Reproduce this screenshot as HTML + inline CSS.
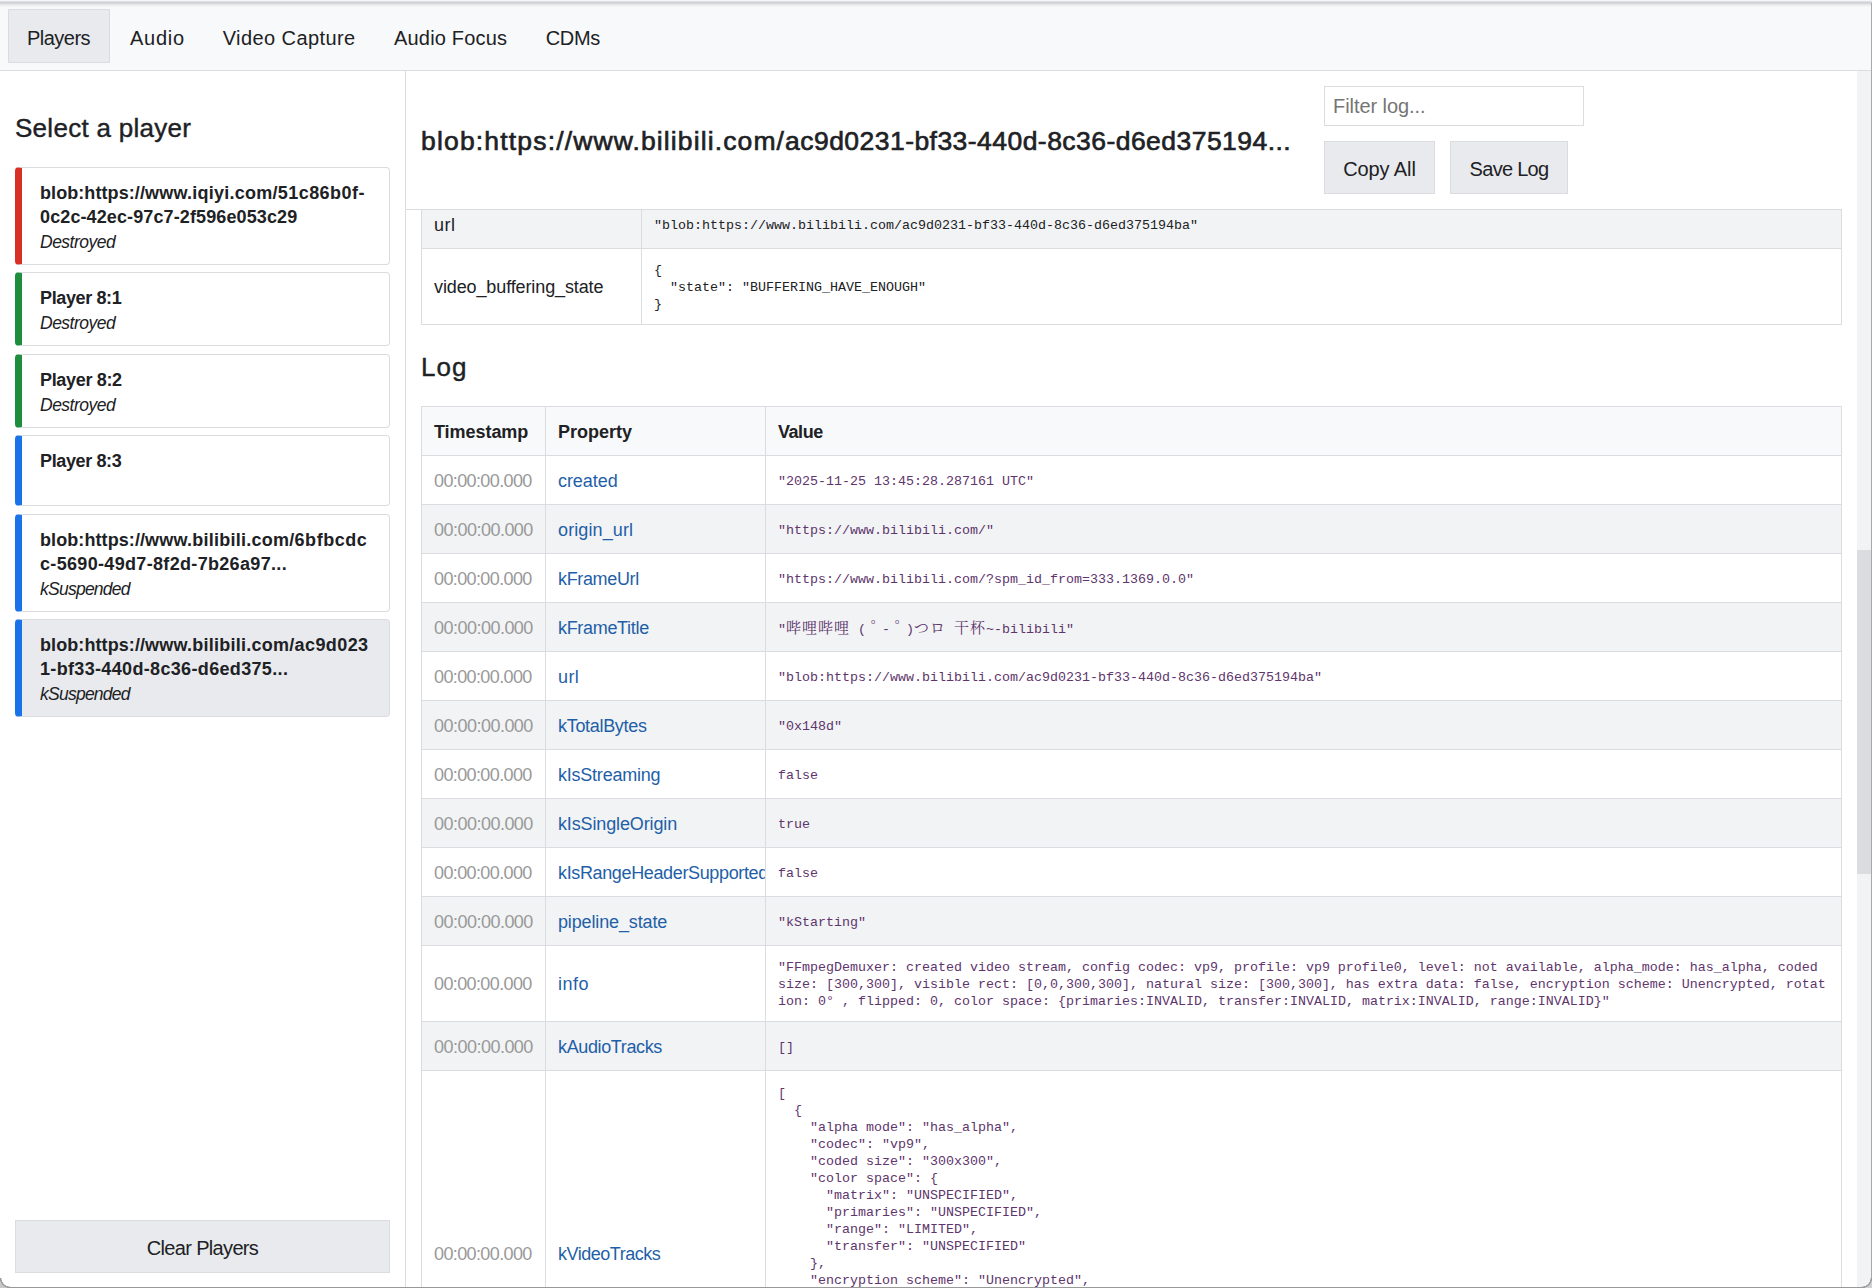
<!DOCTYPE html>
<html lang="en">
<head>
<meta charset="utf-8">
<title>Media Internals</title>
<style>
*{box-sizing:border-box;margin:0;padding:0}
html,body{width:1872px;height:1288px;overflow:hidden;background:#fff}
body{position:relative;font-family:"Liberation Sans","Noto Sans CJK SC",sans-serif;color:#202124;font-size:18px}
.abs{position:absolute}
#nav{left:0;top:0;width:1872px;height:71px;background:#f8f9fa;border-bottom:1px solid #dadce0}
#topshadow{left:0;top:0;width:1872px;height:8px;background:linear-gradient(#f3f6fd 0,#f3f6fd 0.6px,#dfe1e3 1.5px,#cdd0d2 2.5px,#d8dadc 3.5px,#e4e5e7 4.5px,#eeeff1 5.5px,#f4f5f6 6.5px,#f8f9fa 7.5px)}
.tab{top:9px;height:54px;line-height:59px;font-size:20px;white-space:nowrap}
.tab.sel{background:#e8eaed;border:1px solid #dadce0;line-height:57px}
#side{left:0;top:71px;width:406px;height:1217px;border-right:1px solid #dadce0;background:#fff}
h2{font-weight:normal;-webkit-text-stroke:0.4px #202124;font-size:26px;white-space:nowrap}
.pl{left:15px;width:375px;border:1px solid #dadce0;border-left:7px solid #1a73e8;border-radius:4px;background:#fff;padding:13px 0 0 18px;line-height:24px;font-size:18px}
.pl b{display:block;white-space:nowrap;font-weight:bold;height:24px}
.pl i{display:block;font-style:italic;font-size:17.5px;height:24px;position:relative;top:1px}
.btn{background:#e8eaed;border:1px solid #dadce0;font-size:20px;text-align:center;white-space:nowrap}
#main{left:406px;top:71px;width:1451px;height:1217px;overflow:hidden;background:#fff}
#hdr{left:406px;top:71px;width:1436px;height:139px;background:#fff;border-bottom:1px solid #dadce0}
#sb{left:1857px;top:71px;width:14px;height:1217px;background:#f1f3f4}
#thumb{left:1857px;top:550px;width:14px;height:324px;background:#dadce0}
#edge{left:1871px;top:3px;width:1px;height:1285px;background:#a9a9a9}
#bottom{left:0;top:1287px;width:1872px;height:1px;background:#999}
#corner2{left:1862px;top:1278px;width:10px;height:10px;background:radial-gradient(circle at 0 0,rgba(255,255,255,0) 8.3px,#999 8.9px,#999 9.8px,#d0d0d0 10.2px)}
#corner{left:0;top:1278px;width:10px;height:10px;background:radial-gradient(circle at 100% 0,rgba(255,255,255,0) 8.3px,#999 8.9px,#999 9.8px,#c6c7c9 10.2px)}
table{border-collapse:collapse;table-layout:fixed;position:absolute}
td,th{border:1px solid #dadce0;padding:2px 0 0 12px;text-align:left;vertical-align:middle;overflow:hidden;white-space:nowrap;font-size:18px;font-weight:normal}
th{font-weight:bold;background:#f8f9fa}
tr.alt td{background:#f1f3f4}
.mono{font-family:"Liberation Mono","Noto Serif CJK SC",monospace;font-size:13.33px;line-height:17px;white-space:pre}
.v{color:#5e356c}
.ts{color:#999}
.pr{color:#1f5fa8}
.cjk{font-family:"Noto Serif CJK SC",serif;font-size:15px;letter-spacing:1px;line-height:17px}
.fw{display:inline-block;width:16px}
.dk{position:relative;left:5px}
#title{left:421px;top:123px;font-size:26.5px;line-height:36px;font-weight:normal;-webkit-text-stroke:0.65px #202124;white-space:nowrap}
#filter{left:1324px;top:86px;width:260px;height:40px;border:1px solid #dadce0;background:#fff;color:#757575;font-size:20px;line-height:38px;padding-left:8px}
</style>
</head>
<body>
<div id="nav" class="abs"></div>
<div id="topshadow" class="abs"></div>
<div class="abs tab sel" style="left:8px;width:102px;padding-left:18px"><span id="tabPlayers" style="letter-spacing:-0.515px">Players</span></div>
<div class="abs tab" style="left:130px"><span id="tabAudio" style="letter-spacing:0.750px">Audio</span></div>
<div class="abs tab" style="left:222.7px"><span id="tabVC" style="letter-spacing:0.417px">Video Capture</span></div>
<div class="abs tab" style="left:394px"><span id="tabAF" style="letter-spacing:0.190px">Audio Focus</span></div>
<div class="abs tab" style="left:545.7px"><span id="tabCDM" style="letter-spacing:-0.298px">CDMs</span></div>
<div id="side" class="abs"></div>
<h2 class="abs" style="left:15px;top:112px;line-height:32px"><span id="selTitle" style="letter-spacing:0.283px">Select a player</span></h2>
<div class="abs pl" style="top:167px;height:98px;border-left-color:#d93025"><b><span id="p1a_0" style="letter-spacing:0.077px">blob:https://</span><span id="p1a_1" style="letter-spacing:0.237px">www.iqiyi.com/</span><span id="p1a_2" style="letter-spacing:0.479px">51c86b0f-</span></b><b><span id="p1b" style="letter-spacing:0.115px">0c2c-42ec-97c7-2f596e053c29</span></b><i><span id="p1s" style="letter-spacing:-0.500px">Destroyed</span></i></div>
<div class="abs pl" style="top:272px;height:74px;border-left-color:#1e8e3e"><b><span id="p2a" style="letter-spacing:-0.375px">Player 8:1</span></b><i><span id="p2s" style="letter-spacing:-0.500px">Destroyed</span></i></div>
<div class="abs pl" style="top:354px;height:74px;border-left-color:#1e8e3e"><b><span id="p3a" style="letter-spacing:-0.327px">Player 8:2</span></b><i><span id="p3s" style="letter-spacing:-0.500px">Destroyed</span></i></div>
<div class="abs pl" style="top:435px;height:71px"><b><span id="p4a" style="letter-spacing:-0.375px">Player 8:3</span></b></div>
<div class="abs pl" style="top:514px;height:98px"><b><span id="p5a_0" style="letter-spacing:0.083px">blob:https://</span><span id="p5a_1" style="letter-spacing:0.246px">www.bilibili.com/</span><span id="p5a_2" style="letter-spacing:0.532px">6bfbcdc</span></b><b><span id="p5b" style="letter-spacing:0.327px">c-5690-49d7-8f2d-7b26a97...</span></b><i><span id="p5s" style="letter-spacing:-0.750px">kSuspended</span></i></div>
<div class="abs pl" style="top:619px;height:98px;background:#e8eaed"><b><span id="p6a_0" style="letter-spacing:0.083px">blob:https://</span><span id="p6a_1" style="letter-spacing:0.246px">www.bilibili.com/</span><span id="p6a_2" style="letter-spacing:0.416px">ac9d023</span></b><b><span id="p6b" style="letter-spacing:0.337px">1-bf33-440d-8c36-d6ed375...</span></b><i><span id="p6s" style="letter-spacing:-0.750px">kSuspended</span></i></div>
<div class="abs btn" style="left:15px;top:1220px;width:375px;height:53px;line-height:55px"><span id="clear" style="letter-spacing:-0.667px">Clear Players</span></div>
<div id="main" class="abs"></div>
<table style="left:421px;top:199px;width:1421px"><colgroup><col style="width:220px"><col></colgroup>
<tr class="alt" style="height:49px"><td><span id="purl" style="letter-spacing:0.450px">url</span></td><td class="mono">"blob:https://www.bilibili.com/ac9d0231-bf33-440d-8c36-d6ed375194ba"</td></tr>
<tr style="height:76px"><td><span id="pvbs" style="letter-spacing:-0.115px">video_buffering_state</span></td><td class="mono">{
  "state": "BUFFERING_HAVE_ENOUGH"
}</td></tr>
</table>
<h2 class="abs" style="left:421px;top:351px;line-height:32px"><span id="log" style="letter-spacing:1.100px">Log</span></h2>
<table style="left:421px;top:406px;width:1421px"><colgroup><col style="width:124px"><col style="width:220px"><col></colgroup>
<tr style="height:49px"><th><span id="hTs" style="letter-spacing:-0.050px">Timestamp</span></th><th><span id="hPr" style="letter-spacing:0.016px">Property</span></th><th><span id="hVa" style="letter-spacing:-0.450px">Value</span></th></tr>
<tr style="height:49px"><td class="ts"><span id="ts0" style="letter-spacing:-0.612px">00:00:00.000</span></td><td class="pr"><span id="pr0" style="letter-spacing:-0.063px">created</span></td><td class="mono v">"2025-11-25 13:45:28.287161 UTC"</td></tr>
<tr class="alt" style="height:49px"><td class="ts"><span id="ts1" style="letter-spacing:-0.521px">00:00:00.000</span></td><td class="pr"><span id="pr1" style="letter-spacing:0.117px">origin_url</span></td><td class="mono v">"https://www.bilibili.com/"</td></tr>
<tr style="height:49px"><td class="ts"><span id="ts2" style="letter-spacing:-0.612px">00:00:00.000</span></td><td class="pr"><span id="pr2" style="letter-spacing:-0.346px">kFrameUrl</span></td><td class="mono v">"https://www.bilibili.com/?spm_id_from=333.1369.0.0"</td></tr>
<tr class="alt" style="height:49px"><td class="ts"><span id="ts3" style="letter-spacing:-0.521px">00:00:00.000</span></td><td class="pr"><span id="pr3" style="letter-spacing:-0.320px">kFrameTitle</span></td><td class="mono v">"<span class="cjk">哔哩哔哩</span> (<span class="cjk dk">゜</span>-<span class="cjk dk">゜</span>)<span class="cjk">つロ</span> <span class="cjk">干杯</span>~-bilibili"</td></tr>
<tr style="height:49px"><td class="ts"><span id="ts4" style="letter-spacing:-0.612px">00:00:00.000</span></td><td class="pr"><span id="pr4" style="letter-spacing:0.400px">url</span></td><td class="mono v">"blob:https://www.bilibili.com/ac9d0231-bf33-440d-8c36-d6ed375194ba"</td></tr>
<tr class="alt" style="height:49px"><td class="ts"><span id="ts5" style="letter-spacing:-0.521px">00:00:00.000</span></td><td class="pr"><span id="pr5" style="letter-spacing:-0.310px">kTotalBytes</span></td><td class="mono v">"0x148d"</td></tr>
<tr style="height:49px"><td class="ts"><span id="ts6" style="letter-spacing:-0.612px">00:00:00.000</span></td><td class="pr"><span id="pr6" style="letter-spacing:-0.227px">kIsStreaming</span></td><td class="mono v">false</td></tr>
<tr class="alt" style="height:49px"><td class="ts"><span id="ts7" style="letter-spacing:-0.521px">00:00:00.000</span></td><td class="pr"><span id="pr7" style="letter-spacing:-0.132px">kIsSingleOrigin</span></td><td class="mono v">true</td></tr>
<tr style="height:49px"><td class="ts"><span id="ts8" style="letter-spacing:-0.612px">00:00:00.000</span></td><td class="pr"><span id="pr8" style="letter-spacing:-0.360px">kIsRangeHeaderSupported</span></td><td class="mono v">false</td></tr>
<tr class="alt" style="height:49px"><td class="ts"><span id="ts9" style="letter-spacing:-0.521px">00:00:00.000</span></td><td class="pr"><span id="pr9" style="letter-spacing:-0.136px">pipeline_state</span></td><td class="mono v">"kStarting"</td></tr>
<tr style="height:76px"><td class="ts"><span id="ts10" style="letter-spacing:-0.612px">00:00:00.000</span></td><td class="pr"><span id="pr10" style="letter-spacing:0.500px">info</span></td><td class="mono v">"FFmpegDemuxer: created video stream, config codec: vp9, profile: vp9 profile0, level: not available, alpha_mode: has_alpha, coded
size: [300,300], visible rect: [0,0,300,300], natural size: [300,300], has extra data: false, encryption scheme: Unencrypted, rotat
ion: 0<span class="fw">°</span>, flipped: 0, color space: {primaries:INVALID, transfer:INVALID, matrix:INVALID, range:INVALID}"</td></tr>
<tr class="alt" style="height:49px"><td class="ts"><span id="ts11" style="letter-spacing:-0.521px">00:00:00.000</span></td><td class="pr"><span id="pr11" style="letter-spacing:-0.364px">kAudioTracks</span></td><td class="mono v">[]</td></tr>
<tr style="height:366px"><td class="ts"><span id="ts12" style="letter-spacing:-0.612px">00:00:00.000</span></td><td class="pr"><span id="pr12" style="letter-spacing:-0.483px">kVideoTracks</span></td><td class="mono v">[
  {
    "alpha mode": "has_alpha",
    "codec": "vp9",
    "coded size": "300x300",
    "color space": {
      "matrix": "UNSPECIFIED",
      "primaries": "UNSPECIFIED",
      "range": "LIMITED",
      "transfer": "UNSPECIFIED"
    },
    "encryption scheme": "Unencrypted",
    "has extra data": false,
    "hdr metadata": "unset",
    "natural size": "300x300",
    "orientation": "0°",
    "profile": "vp9 profile0",
    "visible rect": "0,0 300x300"
  }
]</td></tr>
</table>
<div id="hdr" class="abs"></div>
<h1 class="abs" id="title"><span id="ttl_0" style="letter-spacing:1.172px">blob:https://</span><span id="ttl_1" style="letter-spacing:1.112px">www.bilibili.com/</span><span id="ttl_2" style="letter-spacing:0.456px">ac9d0231-bf33-440d-8c36-d6ed375194...</span></h1>
<div class="abs" id="filter"><span id="flt" style="letter-spacing:-0.063px">Filter log...</span></div>
<div class="abs btn" style="left:1324px;top:141px;width:111px;height:53px;line-height:55px"><span id="copy" style="letter-spacing:-0.085px">Copy All</span></div>
<div class="abs btn" style="left:1450px;top:141px;width:118px;height:53px;line-height:55px"><span id="save" style="letter-spacing:-0.714px">Save Log</span></div>
<div id="sb" class="abs"></div>
<div id="thumb" class="abs"></div>
<div id="edge" class="abs"></div>
<div id="bottom" class="abs"></div>
<div id="corner" class="abs"></div>
<div id="corner2" class="abs"></div>
</body>
</html>
